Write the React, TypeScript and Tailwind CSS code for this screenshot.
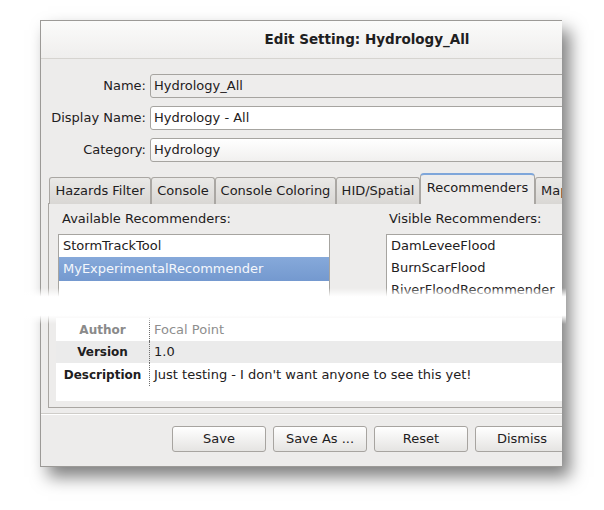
const tabs = [
  { label: 'Hazards Filter', width: 'w-[102px]' },
  { label: 'Console', width: 'w-[64px]' },
  { label: 'Console Coloring', width: 'w-[121px]' },
  { label: 'HID/Spatial', width: 'w-[84px]' },
  { label: 'Recommenders', width: 'w-[115px]', active: true },
  { label: 'Map', width: 'w-[60px]' },
];

const available = ['StormTrackTool', 'MyExperimentalRecommender'];
const visible = ['DamLeveeFlood', 'BurnScarFlood', 'RiverFloodRecommender'];

const details = [
  { key: 'Author', value: 'Focal Point', muted: true },
  { key: 'Version', value: '1.0', shaded: true },
  { key: 'Description', value: "Just testing - I don't want anyone to see this yet!" },
];

function Field({ value, tone }: { value: string; tone: 'disabled' | 'entry' | 'combo' }) {
  const bg =
    tone === 'disabled'
      ? 'bg-[#eeedec]'
      : tone === 'entry'
        ? 'bg-white'
        : 'bg-gradient-to-b from-white to-[#f1f0ef]';
  return (
    <div className={`h-[24px] rounded-[3px] border border-[#a6a4a0] ${bg} pl-[3px] leading-[22px]`}>
      {value}
    </div>
  );
}

export default function App() {
  return (
    <div className="relative h-[510px] w-[604px] overflow-hidden bg-white pl-[40px] pt-[20px] font-['DejaVu_Sans',sans-serif] text-[13px] text-[#1e2021]">
      {/* Dialog (cropped on the right) */}
      <div className="h-[447px] w-[522px] overflow-hidden border-b border-l border-t border-[#9c9a97] bg-[#edeceb] shadow-[8px_10px_16px_rgba(0,0,0,0.5)]">
        <div className="flex w-[652px] flex-col">
          {/* Title bar */}
          <div className="flex h-[38px] items-center justify-center border-b border-[#d6d4d0] bg-gradient-to-b from-[#fbfbfa] to-[#efeeed] text-[13.5px] font-bold">
            Edit Setting: Hydrology_All
          </div>

          {/* Form fields */}
          <div className="grid grid-cols-[105px_1fr] gap-x-[4px] gap-y-[8px] pr-[6px] pt-[15px]">
            <div className="self-center text-right">Name:</div>
            <Field value="Hydrology_All" tone="disabled" />
            <div className="self-center text-right">Display Name:</div>
            <Field value="Hydrology - All" tone="entry" />
            <div className="self-center text-right">Category:</div>
            <Field value="Hydrology" tone="combo" />
          </div>

          {/* Tabs */}
          <div className="mt-[11px] px-[7px]">
            <div className="relative z-10 -mb-px flex h-[31px] items-end pl-[1px]">
              {tabs.map((t) =>
                t.active ? (
                  <div
                    key={t.label}
                    className={`${t.width} flex h-[31px] shrink-0 items-center justify-center rounded-t-[4px] border border-b-0 border-[#a9a6a2] border-t-2 border-t-[#7ea6da] bg-[#edeceb] pb-[3px]`}
                  >
                    {t.label}
                  </div>
                ) : (
                  <div
                    key={t.label}
                    className={`${t.width} flex h-[27px] shrink-0 items-center whitespace-nowrap rounded-t-[3px] border border-b-0 border-[#aaa7a3] bg-gradient-to-b from-[#eae9e7] to-[#d9d7d4] ${t.label === 'Map' ? 'justify-start pl-[5px]' : 'justify-center'}`}
                  >
                    {t.label}
                  </div>
                ),
              )}
            </div>

            <div className="h-[205px] border border-[#a9a6a2] bg-[#edeceb] px-[7px] pt-[6px]">
              <div className="flex pl-[2px]">
                <div className="w-[272px]">
                  <div className="pl-[4px] leading-[17px]">Available Recommenders:</div>
                  <div className="mt-[7px] h-[76px] border border-[#a6a4a0] bg-white">
                    <div className="h-[22px] px-[4px] leading-[22px]">{available[0]}</div>
                    <div className="h-[24px] bg-gradient-to-b from-[#86a9da] to-[#7499cf] px-[4px] leading-[24px] text-[#f4f7fc]">
                      {available[1]}
                    </div>
                  </div>
                </div>
                <div className="ml-[56px] flex-1">
                  <div className="pl-[3px] leading-[17px]">Visible Recommenders:</div>
                  <div className="mt-[7px] h-[76px] border border-[#a6a4a0] bg-white">
                    {visible.map((v) => (
                      <div key={v} className="h-[22px] px-[4px] leading-[22px]">
                        {v}
                      </div>
                    ))}
                  </div>
                </div>
              </div>

              {/* Recommender details */}
              <div className="mt-[8px] h-[83px] bg-white">
                {details.map((d) => (
                  <div
                    key={d.key}
                    className={`grid grid-cols-[94px_1fr] ${d.shaded ? 'h-[22px] bg-[#ebebeb]' : 'h-[23px]'}`}
                  >
                    <div
                      className={`flex items-center justify-center border-r border-dotted border-[#6e6e6e] text-[12px] font-bold ${d.muted ? 'text-[#8a8a8a]' : ''}`}
                    >
                      {d.key}
                    </div>
                    <div className={`flex items-center pl-[4px] ${d.muted ? 'text-[#8e8e8e]' : ''}`}>{d.value}</div>
                  </div>
                ))}
              </div>
            </div>
          </div>

          {/* Separator */}
          <div className="mt-[5px] h-[2px] border-b border-t border-b-white border-t-[#cfcdc9]" />

          {/* Buttons */}
          <div className="mt-[11px] flex gap-[7px] pl-[131px]">
            {['Save', 'Save As ...', 'Reset', 'Dismiss'].map((b) => (
              <button
                key={b}
                className="h-[26px] w-[94px] shrink-0 rounded-[3px] border border-[#a7a4a0] bg-gradient-to-b from-white to-[#e5e4e2] text-[13px]"
              >
                {b}
              </button>
            ))}
          </div>
        </div>
      </div>

      {/* Torn-paper gap across the middle of the screenshot */}
      <div className="absolute left-0 top-[288px] h-[36px] w-[566px] bg-[linear-gradient(to_bottom,rgba(255,255,255,0),#fff_24%,#fff_76%,rgba(255,255,255,0))]" />
    </div>
  );
}
